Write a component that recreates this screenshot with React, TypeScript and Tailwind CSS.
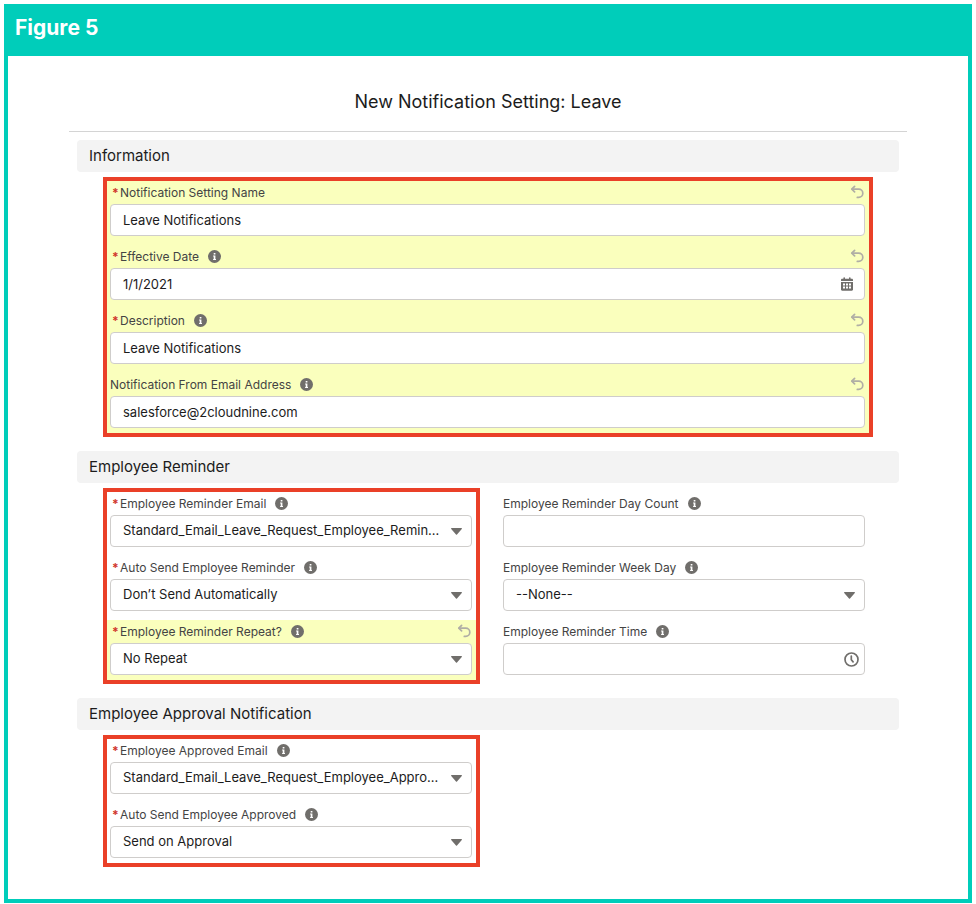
import { ReactNode } from 'react'

type FieldProps = {
  id: string
  label: string
  required?: boolean
  info?: boolean
  edited?: boolean
  children: ReactNode
}

const inputClass =
  'block w-full h-8 rounded-[4px] border border-[#cfcdcb] bg-white pl-3 pr-8 text-[13px] text-[#1c1c1c] outline-none focus:border-blue-500'

function InfoIcon() {
  return (
    <svg className="h-[13px] w-[13px]" viewBox="0 0 13 13">
      <circle cx="6.5" cy="6.5" r="6.5" fill="#706e6b" />
      <path d="M5.7 2.9h1.7v1.6H5.7zM5.1 5.4h2.3v3.5H8v1H5.1v-1h.6V6.4h-.6z" fill="#fff" />
    </svg>
  )
}

function UndoIcon() {
  return (
    <svg className="h-[14px] w-[14px]" viewBox="0 0 14 14" fill="none" stroke="#b0aea5" strokeWidth="1.7" strokeLinecap="round" strokeLinejoin="round">
      <path d="M4.6 1.3L1.8 4.2l2.8 2.7" />
      <path d="M2.2 4.2h6.5a4.1 4.1 0 0 1 0 8.200H7.300" />
    </svg>
  )
}

function CalendarIcon() {
  return (
    <svg className="mr-3 h-[14px] w-3" viewBox="0 0 12 14">
      <path d="M1.2 1.8h1.2V1a.8.8 0 0 1 1.6 0v.8h4V1a.8.8 0 0 1 1.6 0v.8h1.2c.7 0 1.2.5 1.2 1.2v1H0V3c0-.7.5-1.2 1.2-1.2z" fill="#706e6b" />
      <path d="M0 5h12v7.5c0 .7-.5 1.2-1.2 1.2H1.2C.5 13.7 0 13.2 0 12.5z" fill="#706e6b" />
      <path d="M2 6.500h2v2H2zM5 6.500h2v2H5zM8 6.500h2v2H8zM2 9.500h2v2H2zM5 9.500h2v2H5zM8 9.500h2v2H8z" fill="#fff" />
    </svg>
  )
}

function ClockIcon() {
  return (
    <svg className="mr-[6px] h-[15px] w-[15px]" viewBox="0 0 15 15" fill="none" stroke="#706e6b" strokeWidth="1.7" strokeLinecap="round" strokeLinejoin="round">
      <circle cx="7.5" cy="7.5" r="6.5" />
      <path d="M7.300 4v3.800l1.800 2.100" />
    </svg>
  )
}

function Field({ id, label, required, info, edited, children }: FieldProps) {
  return (
    <div className={`pl-[3px] pr-1 pb-[9px] last:pb-[5px] ${edited ? 'bg-[#faffbd]' : ''}`}>
      <div className="flex h-[23px] items-center">
        <label htmlFor={id} className="flex text-xs text-[#444444]">
          {required && <span className="w-[10px] pl-[2px] font-bold text-[#d0342c]">*</span>}
          {label}
        </label>
        {info && (
          <button type="button" aria-label={`Help: ${label}`} className="ml-[9px]">
            <InfoIcon />
          </button>
        )}
        {edited && (
          <button type="button" aria-label={`Undo ${label}`} className="ml-auto self-start pt-1 pr-px">
            <UndoIcon />
          </button>
        )}
      </div>
      {children}
    </div>
  )
}

function TextInput({ id, value = '', icon, iconLabel }: { id: string; value?: string; icon?: ReactNode; iconLabel?: string }) {
  return (
    <div className="relative">
      <input id={id} type="text" defaultValue={value} className={inputClass} />
      {icon && (
        <button type="button" aria-label={iconLabel} className="absolute inset-y-0 right-0 flex w-9 items-center justify-end">
          {icon}
        </button>
      )}
    </div>
  )
}

function Select({ id, value }: { id: string; value: string }) {
  return (
    <div className="relative">
      <select id={id} defaultValue={value} className={`${inputClass} appearance-none`}>
        <option>{value}</option>
      </select>
      <svg className="pointer-events-none absolute right-[10px] top-[13px] h-[7px] w-[11px]" viewBox="0 0 11 7">
        <path d="M.7 0h9.6c.6 0 .9.6.5 1L6 6.600a.7.7 0 0 1-1 0L.2 1C-.2.6.1 0 .7 0z" fill="#706e6b" />
      </svg>
    </div>
  )
}

function Section({ title, children }: { title: string; children: ReactNode }) {
  return (
    <section>
      <h3 className="flex h-8 items-center rounded-[4px] bg-[#f3f3f3] px-3 text-[15px] text-[#1c1c1c]">{title}</h3>
      <div className="px-[26px] pt-[5px]">{children}</div>
    </section>
  )
}

export default function App() {
  return (
    <div className="bg-white px-1 pt-1 pb-[2px] font-['Inter',sans-serif]">
      <div className="border-4 border-[#00cdba] bg-white">
        <header className="h-12 bg-[#00cdba] px-[7px] pt-[6px]">
          <h1 className="text-[21px] leading-7 font-bold text-white">Figure 5</h1>
        </header>

        <form className="px-[61px] pb-8" onSubmit={e => e.preventDefault()}>
          <div className="border-b border-[#d4d4d4] pt-8 pb-[15px]">
            <h2 className="text-center text-[18px] leading-7 text-[#1c1c1c]">New Notification Setting: Leave</h2>
          </div>

          <div className="flex flex-col gap-[14px] px-2 pt-2">
            <Section title="Information">
              <div className="border-4 border-[#ea4028]">
                <Field id="name" label="Notification Setting Name" required edited>
                  <TextInput id="name" value="Leave Notifications" />
                </Field>
                <Field id="date" label="Effective Date" required info edited>
                  <TextInput id="date" value="1/1/2021" icon={<CalendarIcon />} iconLabel="Pick a date" />
                </Field>
                <Field id="description" label="Description" required info edited>
                  <TextInput id="description" value="Leave Notifications" />
                </Field>
                <Field id="from" label="Notification From Email Address" info edited>
                  <TextInput id="from" value="salesforce@2cloudnine.com" />
                </Field>
              </div>
            </Section>

            <Section title="Employee Reminder">
              <div className="grid grid-cols-2 gap-4">
                <div className="border-4 border-[#ea4028]">
                  <Field id="reminder-email" label="Employee Reminder Email" required info>
                    <Select id="reminder-email" value="Standard_Email_Leave_Request_Employee_Remin..." />
                  </Field>
                  <Field id="reminder-auto" label="Auto Send Employee Reminder" required info>
                    <Select id="reminder-auto" value="Don’t Send Automatically" />
                  </Field>
                  <Field id="reminder-repeat" label="Employee Reminder Repeat?" required info edited>
                    <Select id="reminder-repeat" value="No Repeat" />
                  </Field>
                </div>
                <div className="border-4 border-transparent">
                  <Field id="day-count" label="Employee Reminder Day Count" info>
                    <TextInput id="day-count" />
                  </Field>
                  <Field id="week-day" label="Employee Reminder Week Day" info>
                    <Select id="week-day" value="--None--" />
                  </Field>
                  <Field id="time" label="Employee Reminder Time" info>
                    <TextInput id="time" icon={<ClockIcon />} iconLabel="Pick a time" />
                  </Field>
                </div>
              </div>
            </Section>

            <Section title="Employee Approval Notification">
              <div className="grid grid-cols-2 gap-4">
                <div className="border-4 border-[#ea4028]">
                  <Field id="approved-email" label="Employee Approved Email" required info>
                    <Select id="approved-email" value="Standard_Email_Leave_Request_Employee_Appro..." />
                  </Field>
                  <Field id="approved-auto" label="Auto Send Employee Approved" required info>
                    <Select id="approved-auto" value="Send on Approval" />
                  </Field>
                </div>
              </div>
            </Section>
          </div>
        </form>
      </div>
    </div>
  )
}
